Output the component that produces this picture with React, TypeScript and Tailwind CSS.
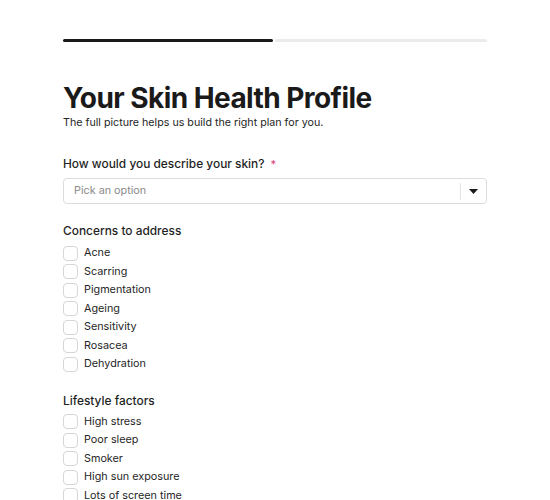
import React from "react";

const concerns = [
  "Acne",
  "Scarring",
  "Pigmentation",
  "Ageing",
  "Sensitivity",
  "Rosacea",
  "Dehydration",
];

const lifestyle = [
  "High stress",
  "Poor sleep",
  "Smoker",
  "High sun exposure",
  "Lots of screen time",
];

const CheckRow: React.FC<{ label: string }> = ({ label }) => (
  <label className="flex items-center gap-[6px] h-[18.5px]">
    <span className="w-[15px] h-[15px] rounded-[4px] border border-[#d6d6d6] bg-white shrink-0" />
    <span className="text-[10.8px] leading-[14px] text-[#262626]">{label}</span>
  </label>
);

const Group: React.FC<{ title: string; items: string[]; tight?: boolean }> = ({
  title,
  items,
  tight,
}) => (
  <div className="flex flex-col">
    <h3
      className={
        tight
          ? "text-[11.9px] leading-[16px] font-medium text-[#1f1f1f] mb-[3.5px]"
          : "text-[11.9px] leading-[16px] font-medium text-[#1f1f1f] mb-[5px]"
      }
    >
      {title}
    </h3>
    {items.map((item) => (
      <CheckRow key={item} label={item} />
    ))}
  </div>
);

export default function App() {
  return (
    <div
      className="w-[550px] h-[500px] overflow-hidden bg-white"
      style={{ fontFamily: "Inter, 'Liberation Sans', sans-serif" }}
    >
      <div className="mx-[63px] pt-[39px]">
        <div className="flex gap-[2px]">
          <div className="h-[3px] w-[210px] bg-[#1a1a1a] rounded-full" />
          <div className="h-[3px] flex-1 bg-[#ebebeb] rounded-full" />
        </div>

        <h1 className="mt-[39px] text-[28px] font-bold tracking-[-0.02em] text-[#1a1a1a] leading-[34px]">
          Your Skin Health Profile
        </h1>
        <p className="text-[10.7px] leading-[14px] text-[#262626] mt-[1px]">
          The full picture helps us build the right plan for you.
        </p>

        <div className="mt-[26px]">
          <div className="flex items-center gap-[6px] text-[11.9px] leading-[16px] font-medium text-[#1f1f1f]">
            How would you describe your skin?
            <span className="text-[#e0457b] text-[11px]">*</span>
          </div>
          <div className="mt-[6px] h-[26px] flex items-center border border-[#dcdcdc] rounded-[4px] bg-white">
            <span className="flex-1 px-[10px] text-[10.8px] text-[#8a8a8a]">Pick an option</span>
            <span className="w-px h-[17px] bg-[#e3e3e3]" />
            <span className="w-[25px] flex justify-center">
              <svg width="9" height="5" viewBox="0 0 9 5">
                <path d="M0 0h9L4.5 5z" fill="#1a1a1a" />
              </svg>
            </span>
          </div>
        </div>

        <div className="mt-[19px]">
          <Group title="Concerns to address" items={concerns} />
        </div>
        <div className="mt-[19.5px]">
          <Group title="Lifestyle factors" items={lifestyle} tight />
        </div>
      </div>
    </div>
  );
}
